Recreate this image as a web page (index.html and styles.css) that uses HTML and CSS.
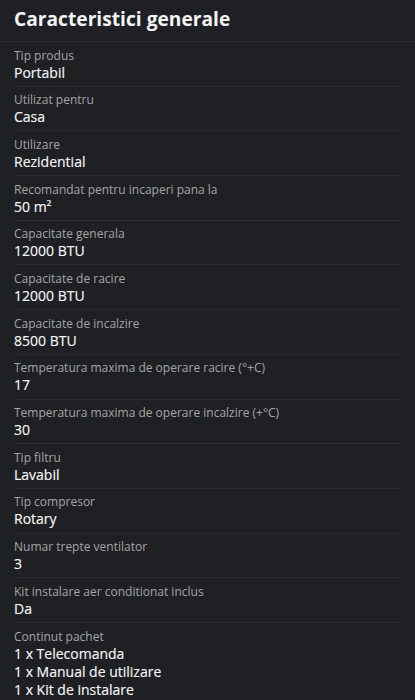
FILE: index.html
```html
<!DOCTYPE html>
<html lang="ro">
<head>
    <meta charset="UTF-8">
    <meta name="viewport" content="width=device-width, initial-scale=1.0">
    <title>Caracteristici generale</title>
    <link rel="stylesheet" href="styles.css">
</head>
<body>

    <div class="specs">
        <h1 class="specs-title">Caracteristici generale</h1>

        <ul class="spec-list">
            <li class="spec-row">
                <div class="spec-label">Tip produs</div>
                <div class="spec-value">Portabil</div>
            </li>
            <li class="spec-row">
                <div class="spec-label">Utilizat pentru</div>
                <div class="spec-value">Casa</div>
            </li>
            <li class="spec-row">
                <div class="spec-label">Utilizare</div>
                <div class="spec-value">Rezidential</div>
            </li>
            <li class="spec-row">
                <div class="spec-label">Recomandat pentru incaperi pana la</div>
                <div class="spec-value">50 m²</div>
            </li>
            <li class="spec-row">
                <div class="spec-label">Capacitate generala</div>
                <div class="spec-value">12000 BTU</div>
            </li>
            <li class="spec-row">
                <div class="spec-label">Capacitate de racire</div>
                <div class="spec-value">12000 BTU</div>
            </li>
            <li class="spec-row">
                <div class="spec-label">Capacitate de incalzire</div>
                <div class="spec-value">8500 BTU</div>
            </li>
            <li class="spec-row">
                <div class="spec-label">Temperatura maxima de operare racire (°+C)</div>
                <div class="spec-value">17</div>
            </li>
            <li class="spec-row">
                <div class="spec-label">Temperatura maxima de operare incalzire (+°C)</div>
                <div class="spec-value">30</div>
            </li>
            <li class="spec-row">
                <div class="spec-label">Tip filtru</div>
                <div class="spec-value">Lavabil</div>
            </li>
            <li class="spec-row">
                <div class="spec-label">Tip compresor</div>
                <div class="spec-value">Rotary</div>
            </li>
            <li class="spec-row">
                <div class="spec-label">Numar trepte ventilator</div>
                <div class="spec-value">3</div>
            </li>
            <li class="spec-row">
                <div class="spec-label">Kit instalare aer conditionat inclus</div>
                <div class="spec-value">Da</div>
            </li>
            <li class="spec-row">
                <div class="spec-label">Continut pachet</div>
                <div class="spec-value">1 x Telecomanda<br>1 x Manual de utilizare<br>1 x Kit de instalare</div>
            </li>
        </ul>
    </div>

</body>
</html>
```

FILE: styles.css
```css
body {
    margin: 0;
    background-color: #1f2023;
    color: #f4f4f5;
    font-family: "Open Sans", "Noto Sans", Arial, sans-serif;
}

.specs {
    width: 100%;
}

.specs-title {
    margin: 0;
    height: 41px;
    padding: 0 14px;
    font-size: 19.2px;
    font-weight: 700;
    line-height: 38px;
    border-bottom: 1px solid #2c2d30;
}

.spec-list {
    list-style: none;
    margin: 0;
    padding: 0 15px 0 14px;
}

.spec-row {
    padding: 4.6px 0 4.1px;
    border-bottom: 1px solid #2c2d30;
}

.spec-label {
    font-size: 12px;
    line-height: 17px;
    color: #a4a5a8;
}

.spec-value {
    font-size: 14px;
    line-height: 18px;
    color: #f7f7f8;
    -webkit-text-stroke: 0.15px #f7f7f8;
}
```
